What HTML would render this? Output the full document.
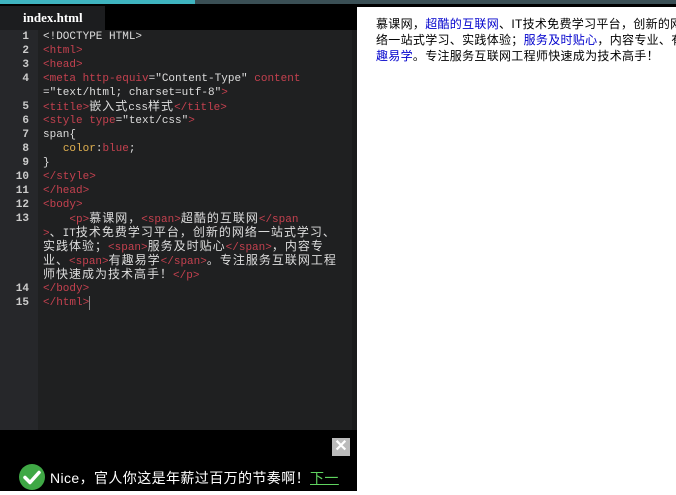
<!DOCTYPE html>
<html><head><meta charset="utf-8">
<style>
*{margin:0;padding:0;box-sizing:border-box}
body{width:676px;height:491px;overflow:hidden;background:#fff;position:relative;font-family:"Liberation Sans","Noto Sans CJK SC",sans-serif}
.top1{position:absolute;left:0;top:0;width:195px;height:4px;background:#3fb4c0}
.top2{position:absolute;left:195px;top:0;width:481px;height:4px;background:#3a4f55}
.blk{position:absolute;left:0;top:4px;width:357px;height:26px;background:#000}
.blk2{position:absolute;left:357px;top:4px;width:319px;height:3px;background:#000}
.tab{position:absolute;left:0;top:6px;width:105px;height:24px;background:#1c1d1f;color:#fff;font:bold 13px "Liberation Serif",serif;padding:4px 0 0 23px}
.ed{position:absolute;left:0;top:30px;width:357px;height:400px;background:#1f2021}
.gut{position:absolute;left:0;top:30px;width:38px;height:400px;background:#26272a}
.sb{position:absolute;left:352px;top:30px;width:5px;height:400px;background:#1a1a1b}
.code{position:absolute;left:0;top:30px;width:357px;font:11px/14px "Liberation Mono","Noto Sans CJK SC",monospace;color:#ddd}
.r{height:14px;position:relative}
.n{position:absolute;left:0;width:29px;text-align:right;color:#ccc;font-weight:bold}
.c{position:absolute;left:43px;white-space:pre}
.k{font-size:12px;letter-spacing:1px;font-weight:normal}
.t{color:#c4414f}
.y{color:#e0b050}
.cur{border-right:1px solid #888}
.bot{position:absolute;left:0;top:430px;width:357px;height:61px;background:#000}
.x{position:absolute;left:332px;top:438px;width:18px;height:18px;background:#bbb;color:#fff;font:bold 16px/18px "Liberation Sans",sans-serif;text-align:center}
.ok{position:absolute;left:19px;top:464px;width:26px;height:26px;border-radius:50%;background:#3fa845}
.msg{position:absolute;left:50px;top:468px;color:#fff;font-size:14px;letter-spacing:0.4px;white-space:nowrap}
.msg u{color:#5fd35f}
.right{position:absolute;left:376px;top:16px;font-size:12px;line-height:16px;letter-spacing:0.3px;color:#000;white-space:nowrap}
.right span{color:#00c}
</style></head><body>
<div class="top1"></div><div class="top2"></div><div class="blk"></div><div class="blk2"></div>
<div class="tab">index.html</div>
<div class="ed"></div><div class="gut"></div><div class="sb"></div>
<div class="code">
<div class="r"><span class="n">1</span><span class="c">&lt;!DOCTYPE HTML&gt;</span></div>
<div class="r"><span class="n">2</span><span class="c t">&lt;html&gt;</span></div>
<div class="r"><span class="n">3</span><span class="c t">&lt;head&gt;</span></div>
<div class="r"><span class="n">4</span><span class="c"><span class="t">&lt;meta http-equiv</span>="Content-Type" <span class="t">content</span></span></div>
<div class="r"><span class="c">="text/html; charset=utf-8"<span class="t">&gt;</span></span></div>
<div class="r"><span class="n">5</span><span class="c"><span class="t">&lt;title&gt;</span><span class="k">嵌入式</span>css<span class="k">样式</span><span class="t">&lt;/title&gt;</span></span></div>
<div class="r"><span class="n">6</span><span class="c"><span class="t">&lt;style type</span>="text/css"<span class="t">&gt;</span></span></div>
<div class="r"><span class="n">7</span><span class="c">span{</span></div>
<div class="r"><span class="n">8</span><span class="c">   <span class="y">color</span>:<span class="t">blue</span>;</span></div>
<div class="r"><span class="n">9</span><span class="c">}</span></div>
<div class="r"><span class="n">10</span><span class="c t">&lt;/style&gt;</span></div>
<div class="r"><span class="n">11</span><span class="c t">&lt;/head&gt;</span></div>
<div class="r"><span class="n">12</span><span class="c t">&lt;body&gt;</span></div>
<div class="r"><span class="n">13</span><span class="c">    <span class="t">&lt;p&gt;</span><span class="k">慕课网，</span><span class="t">&lt;span&gt;</span><span class="k">超酷的互联网</span><span class="t">&lt;/span</span></span></div>
<div class="r"><span class="c"><span class="t">&gt;</span><span class="k">、</span>IT<span class="k">技术免费学习平台，创新的网络一站式学习、</span></span></div>
<div class="r"><span class="c"><span class="k">实践体验；</span><span class="t">&lt;span&gt;</span><span class="k">服务及时贴心</span><span class="t">&lt;/span&gt;</span><span class="k">，内容专</span></span></div>
<div class="r"><span class="c"><span class="k">业、</span><span class="t">&lt;span&gt;</span><span class="k">有趣易学</span><span class="t">&lt;/span&gt;</span><span class="k">。专注服务互联网工程</span></span></div>
<div class="r"><span class="c"><span class="k">师快速成为技术高手！</span><span class="t">&lt;/p&gt;</span></span></div>
<div class="r"><span class="n">14</span><span class="c t">&lt;/body&gt;</span></div>
<div class="r"><span class="n">15</span><span class="c t cur">&lt;/html&gt;</span></div>
</div>
<div class="bot"></div>
<div class="x">✕</div>
<div class="ok"><svg width="26" height="26" viewBox="0 0 26 26"><path d="M6 13.5l5 5 9-10" stroke="#fff" stroke-width="3.5" fill="none" stroke-linecap="round" stroke-linejoin="round"/></svg></div>
<div class="msg">Nice，官人你这是年薪过百万的节奏啊！<u>下一</u></div>
<div class="right">慕课网，<span>超酷的互联网</span>、IT技术免费学习平台，创新的网<br>络一站式学习、实践体验；<span>服务及时贴心</span>，内容专业、有<br><span>趣易学</span>。专注服务互联网工程师快速成为技术高手！</div>
</body></html>
